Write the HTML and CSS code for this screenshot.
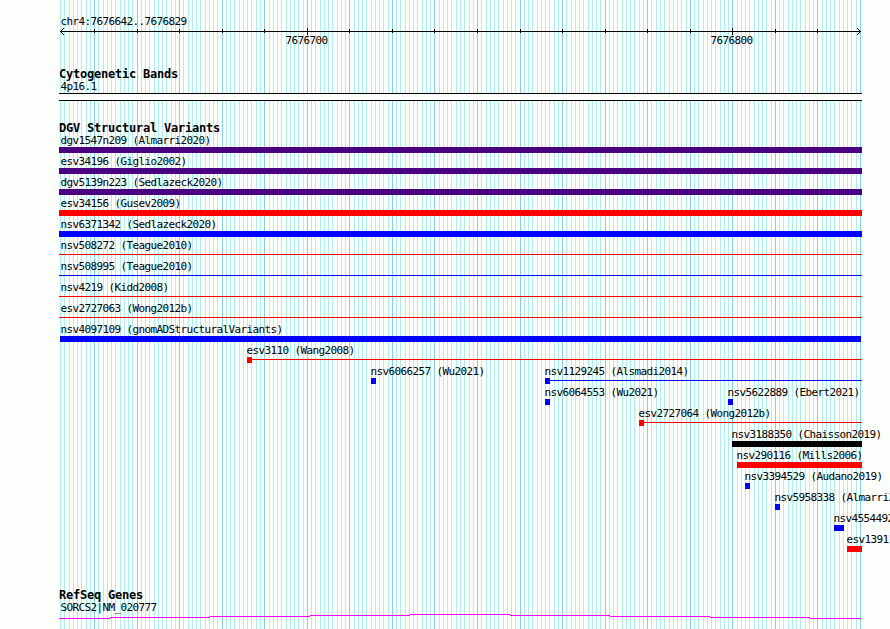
FILE: index.html
```html
<!DOCTYPE html>
<html lang="en">
<head>
  <meta charset="UTF-8">
  <title>chr4:7676642..7676829</title>
  <link rel="stylesheet" href="styles.css">
</head>
<body>
<div class="browser">
  <svg class="gridlines" id="gridlines" width="890" height="629"></svg>

  <div class="ruler">
    <div class="label">chr4:7676642..7676829</div>
    <svg class="axis" id="axis" width="890" height="8"></svg>
    <div class="positions">
      <span class="label position">7676700</span>
      <span class="label position">7676800</span>
    </div>
  </div>

  <div class="track cytobands">
    <div class="track-title">Cytogenetic Bands</div>
    <div class="label">4p16.1</div>
    <div class="band"></div>
  </div>

  <div class="track variants">
    <div class="track-title">DGV Structural Variants</div>
    <div class="row"><div class="feature full"><div class="label">dgv1547n209 (Almarri2020)</div><div class="bar purple"></div></div></div>
    <div class="row"><div class="feature full"><div class="label">esv34196 (Giglio2002)</div><div class="bar purple"></div></div></div>
    <div class="row"><div class="feature full"><div class="label">dgv5139n223 (Sedlazeck2020)</div><div class="bar purple"></div></div></div>
    <div class="row"><div class="feature full"><div class="label">esv34156 (Gusev2009)</div><div class="bar red"></div></div></div>
    <div class="row"><div class="feature full"><div class="label">nsv6371342 (Sedlazeck2020)</div><div class="bar blue"></div></div></div>
    <div class="row"><div class="feature full"><div class="label">nsv508272 (Teague2010)</div><div class="thin red"></div></div></div>
    <div class="row"><div class="feature full"><div class="label">nsv508995 (Teague2010)</div><div class="thin blue"></div></div></div>
    <div class="row"><div class="feature full"><div class="label">nsv4219 (Kidd2008)</div><div class="thin red"></div></div></div>
    <div class="row"><div class="feature full"><div class="label">esv2727063 (Wong2012b)</div><div class="thin red"></div></div></div>
    <div class="row"><div class="feature" style="--start: 0px; --size: 801px"><div class="label edge">nsv4097109 (gnomADStructuralVariants)</div><div class="bar blue"></div></div></div>
    <div class="row"><div class="feature" style="--start: 187px; --size: 5px"><div class="label">esv3110 (Wang2008)</div><div class="span"><div class="bar red"></div><div class="thin red"></div></div></div></div>
    <div class="row">
      <div class="feature" style="--start: 311px; --size: 5px"><div class="label">nsv6066257 (Wu2021)</div><div class="bar blue"></div></div>
      <div class="feature" style="--start: 485px; --size: 5px"><div class="label">nsv1129245 (Alsmadi2014)</div><div class="span"><div class="bar blue"></div><div class="thin blue"></div></div></div>
    </div>
    <div class="row">
      <div class="feature" style="--start: 485px; --size: 5px"><div class="label">nsv6064553 (Wu2021)</div><div class="bar blue"></div></div>
      <div class="feature" style="--start: 668px; --size: 5px"><div class="label">nsv5622889 (Ebert2021)</div><div class="bar blue"></div></div>
    </div>
    <div class="row"><div class="feature" style="--start: 579px; --size: 5px"><div class="label">esv2727064 (Wong2012b)</div><div class="span"><div class="bar red"></div><div class="thin red"></div></div></div></div>
    <div class="row"><div class="feature" style="--start: 672px; --size: 130px"><div class="label">nsv3188350 (Chaisson2019)</div><div class="bar black"></div></div></div>
    <div class="row"><div class="feature" style="--start: 677px; --size: 125px"><div class="label">nsv290116 (Mills2006)</div><div class="bar red"></div></div></div>
    <div class="row"><div class="feature" style="--start: 685px; --size: 5px"><div class="label">nsv3394529 (Audano2019)</div><div class="bar blue"></div></div></div>
    <div class="row"><div class="feature" style="--start: 715px; --size: 5px"><div class="label">nsv5958338 (Almarri2020)</div><div class="bar blue"></div></div></div>
    <div class="row"><div class="feature" style="--start: 774px; --size: 10px"><div class="label">nsv4554492</div><div class="bar blue"></div></div></div>
    <div class="row"><div class="feature" style="--start: 787px; --size: 15px"><div class="label">esv13911</div><div class="bar red"></div></div></div>
  </div>

  <div class="track genes">
    <div class="track-title">RefSeq Genes</div>
    <div class="label">SORCS2|NM_020777</div>
    <svg class="gene" width="890" height="6">
      <path d="M59 5h51v-1h100v-1h100v-1h100v-1h100v1h100v1h100v1h100v1h51v1h-51v-1h-100v-1h-100v-1h-100v-1h-100v1h-100v1h-100v1h-100v1h-51z"/>
    </svg>
  </div>
</div>
<script src="script.js"></script>
</body>
</html>
```

FILE: styles.css
```css
body {
  margin: 0;
  background: #fcfefc;
  color: #000;
  overflow: hidden;
}

.browser {
  position: relative;
  width: 890px;
  height: 629px;
  overflow: hidden;
  display: flex;
  flex-direction: column;
}

/* grid sits under all the tracks */
.gridlines {
  position: absolute;
  top: 0;
  left: 0;
}

.ruler,
.track {
  position: relative;
}

svg {
  display: block;
  shape-rendering: crispEdges;
}

.grid-minor { fill: #afeeee; }
.grid-major { fill: #87ceeb; }

.label {
  font-family: "DejaVu Sans Mono", monospace;
  font-size: 11px;
  line-height: 13px;
  height: 13px;
  letter-spacing: -0.622px;
  white-space: pre;
  margin-left: 60px;
  padding-left: 0.5px;
}

.track-title {
  font-family: "DejaVu Sans Mono", monospace;
  font-size: 12px;
  font-weight: bold;
  line-height: 14px;
  height: 13px;
  letter-spacing: -0.224px;
  white-space: pre;
  margin-left: 59px;
}

/* ruler */
.ruler {
  padding-top: 15px;
  height: 52px;
}

.positions {
  display: flex;
  gap: 383px;
  padding-left: 285px;
  margin-top: -2px;
}

.position {
  box-sizing: border-box;
  width: 42px;
  margin-left: 0;
}

/* cytobands */
.cytobands {
  height: 54px;
}

.band {
  width: 803px;
  height: 6px;
  margin-left: 59px;
  border-top: 1px solid #000;
  border-bottom: 1px solid #000;
  background: #fcfefc;
}

/* structural variants */
.variants {
  height: 467px;
}

.row {
  display: grid;
  height: 21px;
}

.feature {
  grid-area: 1 / 1;
  margin-left: calc(60px + var(--start));
}

.feature.full {
  --start: -1px;
  --size: 803px;
}

.feature .label {
  margin-left: -1px;
}

.feature.full .label {
  margin-left: 1px;
}

.feature .label.edge {
  margin-left: 0;
}

.bar {
  width: var(--size);
  height: 6px;
}

.thin {
  width: 803px;
  height: 1px;
  margin-top: 2px;
}

.span {
  display: flex;
  width: calc(802px - var(--start));
}

.span .bar {
  flex: none;
}

.span .thin {
  flex: 1;
}

.purple { background: #4b0082; }
.red { background: #ff0000; }
.blue { background: #0000ff; }
.black { background: #000000; }

/* genes */
.gene {
  margin-top: -1px;
}

.gene path {
  fill: #ff00ff;
}
```

FILE: script.js
```js
const START = 7676642;
const LEFT = 60;
const SCALE = 800 / 188;

function addRect(svg, x, y, w, h, cls) {
  const rect = document.createElementNS('http://www.w3.org/2000/svg', 'rect');
  rect.setAttribute('x', x);
  rect.setAttribute('y', y);
  rect.setAttribute('width', w);
  rect.setAttribute('height', h);
  if (cls) rect.setAttribute('class', cls);
  svg.appendChild(rect);
}

const grid = document.getElementById('gridlines');
const axis = document.getElementById('axis');

// one line per base, darker every 10 bases
for (let i = 0; i <= 188; i++) {
  const pos = START + i;
  const x = Math.round(LEFT + i * SCALE);
  const major = pos % 10 === 0;
  addRect(grid, x, 0, 1, 629, major ? 'grid-major' : 'grid-minor');

  if (major && i < 188) {
    if (pos % 100 === 0) addRect(axis, x, 0, 1, 7);
    else addRect(axis, x, 1, 1, 4);
  }
}

// axis line with an arrowhead at both ends
addRect(axis, LEFT, 3, 801, 1);
for (let i = 1; i <= 3; i++) {
  addRect(axis, LEFT + i, 3 - i, 1, 1);
  addRect(axis, LEFT + i, 3 + i, 1, 1);
  addRect(axis, 860 - i, 3 - i, 1, 1);
  addRect(axis, 860 - i, 3 + i, 1, 1);
}
```
